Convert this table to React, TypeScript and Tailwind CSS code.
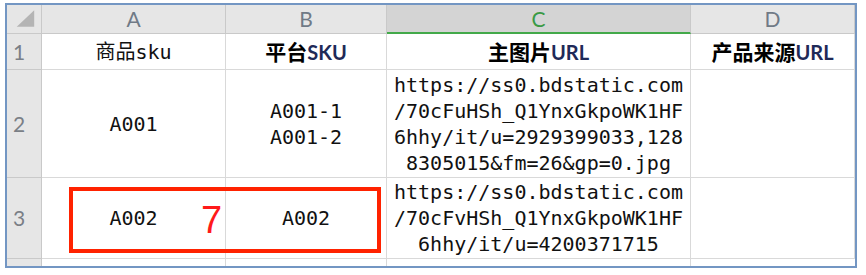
const MONO = "font-['DejaVu_Sans_Mono','Noto_Sans_CJK_SC',monospace] text-[20px] text-[#111]";
const HEAD = "font-['Lato','Liberation_Sans',sans-serif] text-[21px]";
const CJK_BOLD = "font-['Noto_Sans_CJK_SC',sans-serif] font-bold text-[21px] text-black";
const LATIN_BOLD = "font-['Lato','Liberation_Sans',sans-serif] font-bold text-[20px] text-[#1f2a58]";

const cell = "border-r border-b border-[#d9d9d9] flex items-center justify-center";
const colHead = "border-r border-b border-[#c9c9c9] bg-[#e6e6e6] flex items-center justify-center";
const rowHead = "border-r border-b border-[#c9c9c9] bg-[#e6e6e6] flex items-center pl-[6px]";

function Lines({ lines }: { lines: string[] }) {
  return (
    <div className={`${MONO} leading-[26px] text-center whitespace-pre`}>
      {lines.map((l) => (
        <div key={l}>{l}</div>
      ))}
    </div>
  );
}

export default function App() {
  return (
    <div className="w-[866px] h-[275px] bg-white pt-[3px] pl-[5px]">
      <div className="relative w-[852px] h-[265px] border-2 border-[#7396c3] grid grid-cols-[35px_184px_161px_304px_1fr] grid-rows-[29px_36px_108px_81px_1fr] overflow-hidden">
        {/* column headers */}
        <div className={`${colHead} justify-end items-end`}>
          <svg width="35" height="28" viewBox="0 0 35 28" className="block">
            <polygon points="10,22 28,22 28,5" fill="#b4b4b4" />
          </svg>
        </div>
        <div className={`${colHead} ${HEAD} text-[#707a86]`}>A</div>
        <div className={`${colHead} ${HEAD} text-[#707a86]`}>B</div>
        <div className={`border-r border-[#c9c9c9] border-b-2 border-b-[#43a94a] bg-[#d4d4d4] flex items-center justify-center ${HEAD} text-[#3a9a45]`}>
          C
        </div>
        <div className={`${colHead} ${HEAD} text-[#707a86]`}>D</div>

        {/* row 1 */}
        <div className={`${rowHead} ${HEAD} text-[#7a7f86]`}>1</div>
        <div className={cell}>
          <span className={MONO}>商品sku</span>
        </div>
        <div className={cell}>
          <span className={CJK_BOLD}>平台</span>
          <span className={LATIN_BOLD}>SKU</span>
        </div>
        <div className={cell}>
          <span className={CJK_BOLD}>主图片</span>
          <span className={LATIN_BOLD}>URL</span>
        </div>
        <div className={cell}>
          <span className={CJK_BOLD}>产品来源</span>
          <span className={LATIN_BOLD}>URL</span>
        </div>

        {/* row 2 */}
        <div className={`${rowHead} ${HEAD} text-[#7a7f86]`}>2</div>
        <div className={cell}>
          <span className={MONO}>A001</span>
        </div>
        <div className={cell}>
          <Lines lines={["A001-1", "A001-2"]} />
        </div>
        <div className={cell}>
          <Lines
            lines={[
              "https://ss0.bdstatic.com",
              "/70cFuHSh_Q1YnxGkpoWK1HF",
              "6hhy/it/u=2929399033,128",
              "8305015&fm=26&gp=0.jpg",
            ]}
          />
        </div>
        <div className={cell} />

        {/* row 3 */}
        <div className={`${rowHead} ${HEAD} text-[#7a7f86]`}>3</div>
        <div className={cell}>
          <span className={MONO}>A002</span>
        </div>
        <div className={cell}>
          <span className={MONO}>A002</span>
        </div>
        <div className={cell}>
          <Lines
            lines={[
              "https://ss0.bdstatic.com",
              "/70cFvHSh_Q1YnxGkpoWK1HF",
              "6hhy/it/u=4200371715",
            ]}
          />
        </div>
        <div className={cell} />

        {/* row 4 (cut off) */}
        <div className="border-r border-[#c9c9c9] bg-[#e6e6e6]" />
        <div className="border-r border-[#d9d9d9]" />
        <div className="border-r border-[#d9d9d9]" />
        <div className="border-r border-[#d9d9d9]" />
        <div />

        {/* red annotation box */}
        <div className="absolute left-[62px] top-[182px] w-[312px] h-[66px] border-4 border-[#ff2200]">
          <span className="absolute left-[128px] top-[9px] font-['Liberation_Sans',sans-serif] text-[38px] leading-[40px] text-[#ff1a1a]">
            7
          </span>
        </div>
      </div>
    </div>
  );
}
